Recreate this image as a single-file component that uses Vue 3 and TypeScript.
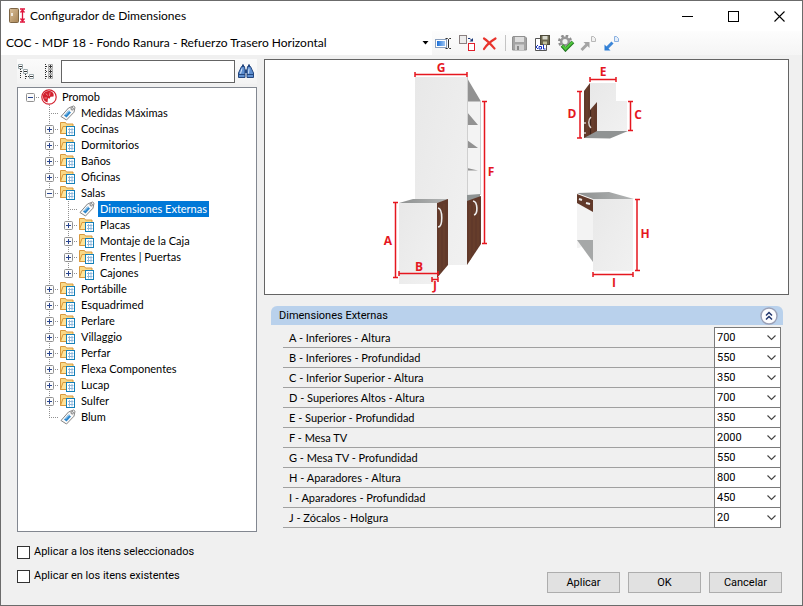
<script setup lang="ts">
import { computed, ref } from 'vue'

interface TreeRow {
  label: string
  depth: number
  kind: 'root' | 'tag' | 'folder'
  toggle?: '+' | '-'
  last?: boolean
}

interface Dimension {
  label: string
  value: string
}

const configuration = ref('COC - MDF 18 - Fondo Ranura - Refuerzo Trasero Horizontal')
const search = ref('')
const selected = ref('Dimensiones Externas')
const applySelected = ref(false)
const applyExisting = ref(false)
const panelOpen = ref(true)

const rows: TreeRow[] = [
  { label: 'Promob', depth: 0, kind: 'root', toggle: '-' },
  { label: 'Medidas Máximas', depth: 1, kind: 'tag' },
  { label: 'Cocinas', depth: 1, kind: 'folder', toggle: '+' },
  { label: 'Dormitorios', depth: 1, kind: 'folder', toggle: '+' },
  { label: 'Baños', depth: 1, kind: 'folder', toggle: '+' },
  { label: 'Oficinas', depth: 1, kind: 'folder', toggle: '+' },
  { label: 'Salas', depth: 1, kind: 'folder', toggle: '-' },
  { label: 'Dimensiones Externas', depth: 2, kind: 'tag' },
  { label: 'Placas', depth: 2, kind: 'folder', toggle: '+' },
  { label: 'Montaje de la Caja', depth: 2, kind: 'folder', toggle: '+' },
  { label: 'Frentes | Puertas', depth: 2, kind: 'folder', toggle: '+' },
  { label: 'Cajones', depth: 2, kind: 'folder', toggle: '+', last: true },
  { label: 'Portábille', depth: 1, kind: 'folder', toggle: '+' },
  { label: 'Esquadrimed', depth: 1, kind: 'folder', toggle: '+' },
  { label: 'Perlare', depth: 1, kind: 'folder', toggle: '+' },
  { label: 'Villaggio', depth: 1, kind: 'folder', toggle: '+' },
  { label: 'Perfar', depth: 1, kind: 'folder', toggle: '+' },
  { label: 'Flexa Componentes', depth: 1, kind: 'folder', toggle: '+' },
  { label: 'Lucap', depth: 1, kind: 'folder', toggle: '+' },
  { label: 'Sulfer', depth: 1, kind: 'folder', toggle: '+' },
  { label: 'Blum', depth: 1, kind: 'tag', last: true },
]

const treeRows = computed(() =>
  rows.map((row) => ({
    ...row,
    guides: Array.from({ length: row.depth + 1 }, (_, i) => ({
      vertical: i > 0,
      half: i === row.depth && !!row.last,
      branch: i === row.depth,
    })),
  })),
)

const dimensions = ref<Dimension[]>([
  { label: 'A - Inferiores - Altura', value: '700' },
  { label: 'B - Inferiores - Profundidad', value: '550' },
  { label: 'C - Inferior Superior - Altura', value: '350' },
  { label: 'D - Superiores Altos - Altura', value: '700' },
  { label: 'E - Superior - Profundidad', value: '350' },
  { label: 'F - Mesa TV', value: '2000' },
  { label: 'G - Mesa TV - Profundidad', value: '550' },
  { label: 'H - Aparadores - Altura', value: '800' },
  { label: 'I - Aparadores - Profundidad', value: '450' },
  { label: 'J - Zócalos - Holgura', value: '20' },
])
</script>

<template>
  <div class="window">
    <header class="titlebar">
      <svg class="app-icon" width="18" height="16" viewBox="0 0 18 16" aria-hidden="true">
        <defs>
          <linearGradient id="door" x1="0" y1="0" x2="1" y2="1">
            <stop offset="0" stop-color="#d9bf9a" />
            <stop offset="1" stop-color="#a88455" />
          </linearGradient>
        </defs>
        <rect x="0.5" y="0.5" width="9" height="14" rx="1" fill="url(#door)" stroke="#7d6544" />
        <path d="M3 5v3" stroke="#fff" stroke-width="1.5" />
        <path d="M11 1h5M11 14h5M13.500 1.500v12M11.500 4.500l2-2.500 2 2.500M11.500 10.500l2 2.500 2-2.500" fill="none" stroke="#e0143c" stroke-width="1.300" />
      </svg>
      <h1>Configurador de Dimensiones</h1>
      <div class="captions">
        <button type="button" aria-label="Minimizar"><svg width="11" height="11"><path d="M0 5.500h11" stroke="#000" /></svg></button>
        <button type="button" aria-label="Maximizar"><svg width="11" height="11"><rect x="0.500" y="0.500" width="10" height="10" fill="none" stroke="#000" /></svg></button>
        <button type="button" aria-label="Cerrar"><svg width="11" height="11"><path d="M0.500 0.500l10 10M10.500 0.500l-10 10" stroke="#000" stroke-width="1.100" /></svg></button>
      </div>
    </header>

    <div class="toolbar">
      <div class="combo">
        <select v-model="configuration" aria-label="Configuración">
          <option>COC - MDF 18 - Fondo Ranura - Refuerzo Trasero Horizontal</option>
        </select>
        <svg width="7" height="4" aria-hidden="true"><path d="M0.500 0h6l-3 3.500z" /></svg>
      </div>
      <button type="button" aria-label="Renombrar">
        <svg width="17" height="17" viewBox="0 0 17 17">
          <defs>
            <linearGradient id="blue" x1="0" y1="0" x2="1" y2="0">
              <stop offset="0" stop-color="#1b6fd8" />
              <stop offset="1" stop-color="#9cc6f5" />
            </linearGradient>
          </defs>
          <rect x="0.500" y="4.500" width="11" height="8" fill="#fff" stroke="#8ba0bd" />
          <rect x="2" y="6" width="8" height="5" fill="url(#blue)" />
          <path d="M10.500 3.500h2l1 1 1-1h1.500M13.500 4.500v8M10.500 13.500h2l1-1 1 1h1.500" fill="none" stroke="#333" />
        </svg>
      </button>
      <button type="button" aria-label="Duplicar">
        <svg width="18" height="17" viewBox="0 0 18 17">
          <rect x="1.500" y="0.500" width="7" height="8" fill="#ececec" stroke="#8a8080" />
          <path d="M10 3.500h2l1.500 1.500" stroke="#1c3a7a" fill="none" />
          <path d="M11.500 6.500h3.500V3z" fill="#1c3a7a" />
          <rect x="10.500" y="8.500" width="6" height="7" fill="#fff" stroke="#e0202c" />
        </svg>
      </button>
      <button type="button" aria-label="Eliminar">
        <svg width="17" height="17" viewBox="0 0 17 17">
          <path d="M3 3.500c4 2.500 7 6 10.500 10M14.500 3.500C9.500 6.500 5.500 10 3 14" fill="none" stroke="#e8332c" stroke-width="2.200" stroke-linecap="round" />
        </svg>
      </button>
      <span class="separator"></span>
      <button type="button" aria-label="Guardar">
        <svg width="17" height="17" viewBox="0 0 17 17">
          <path d="M2 1.500h12l1.500 1.500v12H1.500v-13z" fill="#a4a4a4" stroke="#909090" />
          <rect x="4" y="2" width="9" height="5" fill="#dedede" />
          <rect x="4" y="9.500" width="9" height="5.500" fill="#cfcfcf" />
          <rect x="6" y="11" width="2" height="4" fill="#888" />
        </svg>
      </button>
      <button type="button" aria-label="Guardar como">
        <svg width="17" height="17" viewBox="0 0 17 17">
          <path d="M1.500 3.500h11v12h-11z" fill="#fff" stroke="#555" />
          <rect x="6.500" y="0.500" width="9" height="9" fill="#6c6850" stroke="#4c493a" />
          <rect x="8.500" y="1" width="5" height="3.500" fill="#d8d8cc" />
          <rect x="9" y="6.500" width="4" height="3" fill="#c2c09a" />
          <path d="M4 10l-2 2 2 2M5 11.500h2.500v2.500H5zM9.500 9.500v4.500h2" fill="none" stroke="#1733c4" />
        </svg>
      </button>
      <button type="button" aria-label="Validar">
        <svg width="18" height="17" viewBox="0 0 18 17">
          <circle cx="8" cy="6.500" r="5.500" fill="none" stroke="#8f8f8f" stroke-width="3" stroke-dasharray="2.400 1.920" />
          <circle cx="8" cy="6.500" r="3.800" fill="#f2f2f2" stroke="#989898" stroke-width="2.400" />
          <path d="M5 10.500l3.500 4 7.500-7.500" fill="none" stroke="#227622" stroke-width="3.600" />
          <path d="M5.500 10.500l3 3.500 7-7" fill="none" stroke="#4fc63b" stroke-width="2.200" />
        </svg>
      </button>
      <button type="button" aria-label="Importar">
        <svg width="17" height="17" viewBox="0 0 17 17">
          <path d="M11.500 1.500h2l2 2v3h-4z" fill="#f2f2f2" stroke="#b8b8b8" />
          <path d="M1.500 15L7 9.500" stroke="#a4a4a4" stroke-width="3" />
          <path d="M3.500 7h6v6z" fill="#a4a4a4" />
        </svg>
      </button>
      <button type="button" aria-label="Exportar">
        <svg width="17" height="17" viewBox="0 0 17 17">
          <path d="M11.500 1.500h2l2 2v3h-4z" fill="#e4eefa" stroke="#8ab0e0" />
          <path d="M9.500 7.500L4 13" stroke="#3c86d8" stroke-width="3" />
          <path d="M1.500 9.500v6h6z" fill="#2f7fd6" />
        </svg>
      </button>
    </div>

    <main class="content">
      <aside class="sidebar">
        <form class="search" @submit.prevent>
          <button type="button" aria-label="Contraer todo">
            <svg width="16" height="16" viewBox="0 0 16 16">
              <path d="M2.500 5v10M3 7.500h3M7.500 10v6M8 12.500h3" stroke="#333" stroke-dasharray="1 1" />
              <path d="M0.500 0.500h4v4h-4zM5.500 5.500h4v4h-4zM11.500 10.500h4v4h-4z" fill="#fff" stroke="#9aa8ac" />
              <path d="M1 2.500h3M6 7.500h3M12 12.500h3" stroke="#333" />
            </svg>
          </button>
          <button type="button" aria-label="Expandir todo">
            <svg width="16" height="16" viewBox="0 0 16 16">
              <path d="M5.500 0v16M6 2.500h3M6 7.500h3M6 12.500h3" stroke="#333" stroke-dasharray="1 1" />
              <path d="M8.500 0.500h4v4h-4zM8.500 5.500h4v4h-4zM8.500 10.500h4v4h-4z" fill="#eee" stroke="#aaa" />
              <path d="M9 2.500h3M10.500 1v3M9 7.500h3M10.500 6v3M9 12.500h3M10.500 11v3" stroke="#333" />
            </svg>
          </button>
          <input v-model="search" type="text" aria-label="Buscar" />
          <button type="submit" aria-label="Buscar">
            <svg width="16" height="16" viewBox="0 0 16 16">
              <path d="M3.500 2.500h3l0.500 4v7H0.500V9zM12.500 2.500h-3l-0.500 4v7h6.500V9z" fill="#5e8fd0" stroke="#24477f" />
              <path d="M4 0.500h2v2H4zM10 0.500h2v2h-2z" fill="#24477f" />
              <path d="M7 5.500h2V9H7z" fill="#24477f" />
              <path d="M4 4.500L2.500 9.500M11 4.500l-0.500 5" stroke="#d7e6fa" />
              <path d="M1 10.500h6M9 10.500h6" stroke="#24477f" />
            </svg>
          </button>
        </form>

        <ul class="tree" role="tree">
          <li
            v-for="row in treeRows"
            :key="row.label"
            role="treeitem"
            :aria-level="row.depth + 1"
            :aria-selected="row.label === selected"
            @click="selected = row.label"
          >
            <span
              v-for="(guide, i) in row.guides"
              :key="i"
              class="guide"
              :class="{ vertical: guide.vertical, half: guide.half, branch: guide.branch }"
            >
              <svg v-if="guide.branch && row.toggle" class="toggle" width="9" height="9" viewBox="0 0 9 9">
                <rect x="0.500" y="0.500" width="8" height="8" rx="1" fill="#fbfbfb" stroke="#919191" />
                <path d="M2 4.500h5" stroke="#28448e" />
                <path v-if="row.toggle === '+'" d="M4.500 2v5" stroke="#28448e" />
              </svg>
            </span>
            <svg v-if="row.kind === 'root'" class="node" width="17" height="16" viewBox="0 0 17 16">
              <circle cx="9" cy="8" r="7.200" fill="#fff" stroke="#d3202e" stroke-width="1.200" />
              <path d="M8.500 2C4.500 2 2.500 5 3 8.500c.4 2.500 2 4.500 4.500 5l.5-4.500 1.500.8 1-2 3-.3C14.500 4 12 2 8.500 2z" fill="#d3202e" />
              <path d="M6 4.500l1.500 2M10 3.500l-.5 3.500M4.500 9h2.500" stroke="#f6b3b5" stroke-width="0.700" />
            </svg>
            <svg v-else-if="row.kind === 'tag'" class="node" width="17" height="16" viewBox="0 0 17 16">
              <path d="M2 11.500L9.500 3l5-2 1.500 1.200-1 5L7.500 15z" fill="#fafafa" stroke="#858585" stroke-linejoin="round" />
              <path d="M5 10.500L9.500 5.500l2.500 2L7.500 12.500z" fill="#2d87cc" />
              <path d="M6.500 10l4 -4.500" stroke="#a9d4f2" />
              <circle cx="13.200" cy="3.800" r="1.200" fill="#fff" stroke="#777" />
            </svg>
            <svg v-else class="node" width="17" height="16" viewBox="0 0 17 16">
              <path d="M1.500 12.500V1.500h5l1 1.500h6.500v9.500z" fill="#f9d988" stroke="#d9983c" />
              <path d="M1.500 12.500l2.500-7h11v7z" fill="#ffe49a" stroke="#d9983c" />
              <rect x="7.500" y="5.500" width="8" height="9" fill="#fff" stroke="#1580b8" />
              <path d="M9 8.500h5.500M9 11.500h5.500M10.500 7v6.500M13 7v6.500" stroke="#8fb8dc" />
            </svg>
            <span class="label">{{ row.label }}</span>
          </li>
        </ul>
      </aside>

      <section class="details">
        <figure class="preview">
          <svg viewBox="265 60 523 234" role="img" aria-label="Muebles con sus cotas">
            <defs>
              <linearGradient id="face" x1="0" y1="0" x2="1" y2="1">
                <stop offset="0" stop-color="#e8e8e8" />
                <stop offset="1" stop-color="#f1f1f1" />
              </linearGradient>
              <linearGradient id="top" x1="0" y1="0" x2="1" y2="0">
                <stop offset="0" stop-color="#8d9090" />
                <stop offset="1" stop-color="#b4b6b6" />
              </linearGradient>
            </defs>
            <g>
              <path d="M415 77h52v188h-52z" fill="url(#face)" />
              <path d="M467 77l13 24v95h-13z" fill="#f3f3f3" />
              <path d="M467 78l14 23.500h-14zM467 112l11 13h-11zM467 140l11 8h-11zM467 168l11 2.500h-11z" fill="#929292" />
              <path d="M467.500 77v124M480.500 101v94" stroke="#cfcfcf" />
              <path d="M467 195l13-1v4l-13 4z" fill="#8f9494" />
              <path d="M467 201l14-5v48l-14 21z" fill="#61392a" />
              <path d="M470 205v55M474 203v48M478 200v46" stroke="#70462f" stroke-width="0.700" />
              <path d="M473 201c5 1 5 13 1 14" fill="none" stroke="#eee" stroke-width="1.600" />
              <path d="M399 203l14-4h35v1l-11 3z" fill="url(#top)" />
              <path d="M399 203h38v75l-5 6h-33z" fill="url(#face)" />
              <path d="M437 203l11-4v66l-11 13z" fill="#61392a" />
              <path d="M440 206v67M444 204v64" stroke="#70462f" stroke-width="0.700" />
              <path d="M438 208c5 1 5 19 0 19" fill="none" stroke="#eee" stroke-width="1.600" />
            </g>
            <g>
              <path d="M590 83h26v18h11v30h-37z" fill="url(#face)" />
              <path d="M584 91l6-8v55h-6zM590 110l7-8v30l-7 5z" fill="#61392a" />
              <path d="M587 88v47M593 108v25" stroke="#70462f" stroke-width="0.700" />
              <path d="M590.500 110v27" stroke="#3e2419" />
              <path d="M584 138l13-7h31l-18 7.500z" fill="#909393" />
              <path d="M591 117c-3 3-3 8 0 11M585 122v2M585 132v2" fill="none" stroke="#d8d2ce" stroke-width="1.400" />
            </g>
            <g>
              <path d="M577 202h16v38l-14 8h-2z" fill="#f3f3f3" />
              <path d="M577 240h16v22z" fill="#a6a8a8" />
              <path d="M577 193l32-1 25 7h-41z" fill="url(#top)" />
              <path d="M577 194l16 6v12l-16-9z" fill="#61392a" />
              <path d="M579 199l3 1M586 203l4 1" stroke="#eee" stroke-width="2" />
              <path d="M593 199h40v72h-40z" fill="url(#face)" />
            </g>
            <g class="measure">
              <path d="M415 74.500h52M415 72v5M467 72v5" />
              <path d="M484.500 101v143M482 101.500h5M482 243.500h5" />
              <path d="M395.500 203v75M393 202.500h5M393 277.500h5" />
              <path d="M399 273.500h39M399 271v5M438 271v5" />
              <path d="M432 279.500h6M432 277v5M438 277v5" />
              <path d="M590 79.500h26M590 77v5M616 77v5" />
              <path d="M580 91v47M577 91.500h5M577 138h5" />
              <path d="M630.500 101v30M628 101.500h5M628 130.500h5" />
              <path d="M637 199v72M635 199.500h5M635 270.500h5" />
              <path d="M593 274.500h40M593 272v5M633 272v5" />
            </g>
            <g class="marks">
              <text x="441" y="72">G</text>
              <text x="491" y="176">F</text>
              <text x="388" y="245">A</text>
              <text x="419" y="271">B</text>
              <text x="435" y="290">J</text>
              <text x="603" y="76">E</text>
              <text x="572" y="118">D</text>
              <text x="638" y="119">C</text>
              <text x="645" y="238">H</text>
              <text x="614" y="287">I</text>
            </g>
          </svg>
        </figure>

        <section class="panel">
          <header class="panel-head">
            <h2>Dimensiones Externas</h2>
            <button type="button" aria-label="Contraer" @click="panelOpen = !panelOpen">
              <svg width="18" height="18" viewBox="0 0 18 18">
                <circle cx="9" cy="9" r="8" fill="#fcfcfe" stroke="#9aa0b6" stroke-width="1.400" />
                <path d="M6 8.500l3-3 3 3M6 12.500l3-3 3 3" fill="none" stroke="#21366e" stroke-width="1.500" />
              </svg>
            </button>
          </header>
          <div v-show="panelOpen" class="fields">
            <div v-for="(item, i) in dimensions" :key="item.label" class="field">
              <label :for="`dim-${i}`">{{ item.label }}</label>
              <div class="picker">
                <select :id="`dim-${i}`" v-model="item.value">
                  <option>{{ item.value }}</option>
                </select>
                <svg width="9" height="6" aria-hidden="true"><path d="M0.500 0.500l4 4 4-4" fill="none" stroke="#444" stroke-width="1.100" /></svg>
              </div>
            </div>
          </div>
        </section>
      </section>
    </main>

    <footer class="footer">
      <div class="checks">
        <label><input v-model="applySelected" type="checkbox" />Aplicar a los itens seleccionados</label>
        <label><input v-model="applyExisting" type="checkbox" />Aplicar en los itens existentes</label>
      </div>
      <div class="actions">
        <button type="button">Aplicar</button>
        <button type="button">OK</button>
        <button type="button">Cancelar</button>
      </div>
    </footer>
  </div>
</template>

<style>
body {
  margin: 0;
  background: #f0f0f0;
}
</style>

<style scoped>
.window {
  display: flex;
  flex-direction: column;
  box-sizing: border-box;
  min-height: 100vh;
  border: 1px solid #6b6b6b;
  background: #f0f0f0;
  color: #000;
  font: 11px/16px Roboto, "Liberation Sans", sans-serif;
}

button,
input,
select {
  font: inherit;
  color: inherit;
}

svg {
  display: block;
}

h1,
h2 {
  margin: 0;
  font: inherit;
}

.titlebar {
  display: flex;
  align-items: center;
  gap: 3px;
  height: 30px;
  padding-left: 8px;
  background: #fff;
  font: 12px/16px Lato, sans-serif;
}

.captions {
  display: flex;
  align-self: stretch;
  margin-left: auto;
}

.captions button {
  display: grid;
  place-items: center;
  width: 46px;
  padding: 0;
  border: 0;
  background: none;
}

.toolbar {
  display: flex;
  align-items: center;
  height: 24px;
  background: linear-gradient(#fdfdfd, #f5f5f5);
  font: 12px/16px Lato, sans-serif;
}

.toolbar button,
.search button {
  display: grid;
  place-items: center;
  width: 23px;
  height: 22px;
  padding: 0;
  border: 0;
  background: none;
}

.combo {
  display: grid;
  align-items: center;
  width: 431px;
  background: #fff;
}

.combo select,
.combo svg,
.picker select,
.picker svg {
  grid-area: 1 / 1;
}

.combo select {
  height: 24px;
  padding: 0 16px 0 5px;
  border: 0;
  background: none;
  appearance: none;
}

.combo svg,
.picker svg {
  justify-self: end;
  pointer-events: none;
}

.combo svg {
  margin-right: 3px;
}

.separator {
  width: 1px;
  height: 16px;
  margin: 0 2px 0 4px;
  background: #c4c4c4;
}

.content {
  display: grid;
  flex: 1;
  grid-template-columns: 240px 1fr;
  gap: 7px;
  padding: 4px 13px 0 16px;
}

.sidebar {
  display: flex;
  flex-direction: column;
  gap: 3px;
}

.search {
  display: flex;
  align-items: center;
  height: 25px;
  background: linear-gradient(#fbfbfb, #f3f3f3);
}

.search button:first-child {
  width: 17px;
}

.search button:nth-child(2) {
  width: 27px;
}

.search button:last-child {
  width: 22px;
}

.search input {
  flex: 1;
  box-sizing: border-box;
  min-width: 0;
  height: 23px;
  border: 1px solid #646464;
  background: #fff;
}

.tree {
  flex: 1;
  margin: 0;
  padding: 1px 0 0 3px;
  border: 1px solid #828790;
  background: #fff;
  font-family: Lato, sans-serif;
  list-style: none;
}

.tree li {
  display: flex;
  height: 16px;
}

.guide {
  display: grid;
  place-items: center;
  width: 19px;
  height: 16px;
  background-repeat: no-repeat;
}

.guide.vertical {
  background-image: repeating-linear-gradient(#909090 0 1px, transparent 1px 2px);
  background-position: 9px 0;
  background-size: 1px 16px;
}

.guide.branch {
  background-image: repeating-linear-gradient(90deg, #909090 0 1px, transparent 1px 2px);
  background-position: 9px 8px;
  background-size: 10px 1px;
}

.guide.vertical.branch {
  background-image:
    repeating-linear-gradient(#909090 0 1px, transparent 1px 2px),
    repeating-linear-gradient(90deg, #909090 0 1px, transparent 1px 2px);
  background-position: 9px 0, 9px 8px;
  background-size: 1px 16px, 10px 1px;
}

.guide.vertical.half {
  background-size: 1px 8px, 10px 1px;
}

.node {
  margin-right: 3px;
}

.label {
  padding: 0 2px;
}

[aria-selected="true"] .label {
  background: #0078d7;
  color: #fff;
}

.details {
  display: flex;
  flex-direction: column;
  gap: 11px;
}

.preview {
  margin: 0;
  border: 1px solid #646464;
  background: #fff;
}

.preview svg {
  width: 100%;
}

.measure path {
  fill: none;
  stroke: #e5171f;
  stroke-width: 1.5;
}

.marks text {
  fill: #e5171f;
  font: bold 12px "Open Sans", sans-serif;
  text-anchor: middle;
}

.panel {
  padding: 0 6px 0 7px;
}

.panel-head {
  display: flex;
  align-items: center;
  justify-content: space-between;
  height: 19px;
  padding: 0 5px 0 8px;
  border-radius: 6px 6px 0 0;
  background: #b9d1ec;
}

.panel-head button {
  padding: 0;
  border: 0;
  background: none;
}

.fields {
  padding: 3px 2px 0 12px;
}

.field {
  display: flex;
  align-items: center;
  height: 19px;
  border-bottom: 1px solid #a0a0a0;
}

.field label {
  flex: 1;
  padding: 1px 0 0 6px;
  font-family: Lato, sans-serif;
}

.picker {
  display: grid;
  align-items: center;
  box-sizing: border-box;
  width: 67px;
  height: 21px;
  border: 1px solid #7a7a7a;
  background: #fff;
}

.picker select {
  width: 100%;
  height: 19px;
  padding: 0 0 0 2px;
  border: 0;
  background: none;
  appearance: none;
}

.picker svg {
  margin-right: 4px;
}

.footer {
  display: flex;
  align-items: flex-end;
  justify-content: space-between;
  padding: 12px 20px 12px 16px;
}

.checks {
  display: flex;
  flex-direction: column;
  gap: 8px;
  padding-bottom: 9px;
}

.checks label {
  display: flex;
  align-items: center;
  gap: 4px;
}

.checks input {
  box-sizing: border-box;
  width: 13px;
  height: 13px;
  margin: 0;
  border: 1px solid #333;
  background: #fff;
  appearance: none;
}

.checks input:checked {
  background: #0078d7;
}

.actions {
  display: flex;
  gap: 8px;
}

.actions button {
  box-sizing: border-box;
  width: 73px;
  height: 21px;
  padding: 0;
  border: 1px solid #adadad;
  background: #e1e1e1;
}
</style>
